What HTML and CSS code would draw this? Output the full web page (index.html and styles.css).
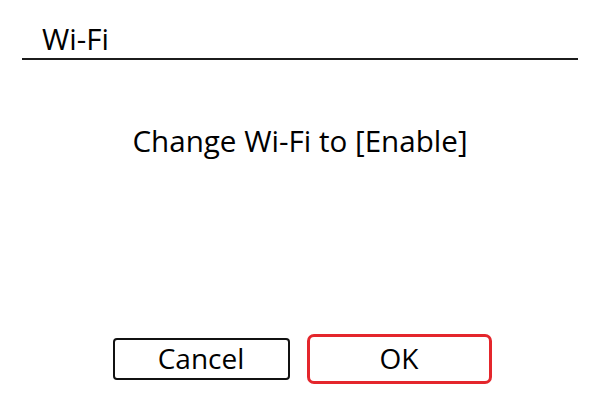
FILE: index.html
```html
<!DOCTYPE html>
<html lang="en">
<head>
<meta charset="utf-8">
<title>Wi-Fi</title>
<link rel="stylesheet" href="styles.css">
</head>
<body>
<div class="screen">
  <header class="header">
    <h1 class="title">Wi-Fi</h1>
  </header>
  <p class="message">Change Wi-Fi to [Enable]</p>
  <div class="actions">
    <button class="btn">Cancel</button>
    <button class="btn btn-focus">OK</button>
  </div>
</div>
</body>
</html>
```

FILE: styles.css
```css
html, body {
  margin: 0;
  padding: 0;
  background: #ffffff;
}

.screen {
  width: 600px;
  height: 400px;
  display: flex;
  flex-direction: column;
  font-family: "Open Sans", "DejaVu Sans", sans-serif;
  color: #000000;
  box-sizing: border-box;
}

.header {
  margin: 0 22px;
  padding-top: 19px;
  border-bottom: 2px solid #1c1c1c;
}

.title {
  margin: 0;
  padding-left: 20px;
  font-size: 29.5px;
  font-weight: 400;
  line-height: 39px;
}

.message {
  margin: 61px 0 0;
  text-align: center;
  font-size: 29.6px;
  line-height: 40px;
}

.actions {
  margin-top: auto;
  padding-bottom: 20px;
  display: flex;
  justify-content: center;
  gap: 21px;
}

.btn {
  width: 177px;
  height: 42px;
  box-sizing: border-box;
  border: 2px solid #111111;
  border-radius: 4px;
  background: #ffffff;
  padding: 0 0 2px;
  font-family: "Open Sans", "DejaVu Sans", sans-serif;
  font-size: 28px;
  line-height: 36px;
  color: #000000;
}

.btn-focus {
  border-color: #ffffff;
  outline: 3px solid #e4262c;
  outline-offset: 1px;
  border-radius: 3px;
}
```
